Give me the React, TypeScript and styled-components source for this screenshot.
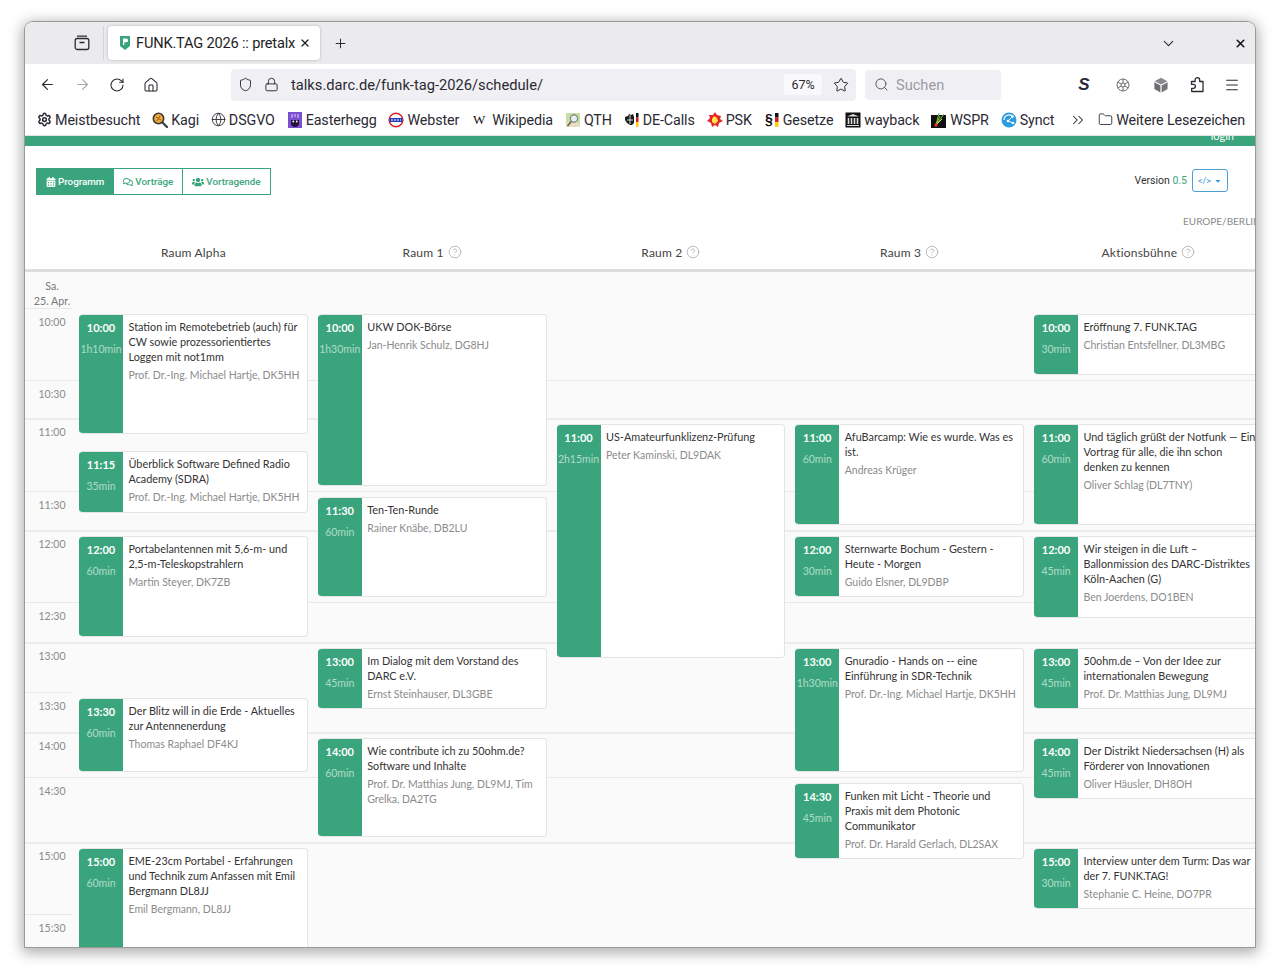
import React from 'react';
import styled, { createGlobalStyle } from 'styled-components';
import {
  ArrowLeft,
  ArrowRight,
  ChevronDown,
  ChevronsRight,
  CircleHelp,
  Folder,
  Globe,
  Home,
  Lock,
  Menu,
  Plus,
  RotateCw,
  Search,
  Settings,
  Shield,
  Star,
  X,
} from 'lucide-react';
import { FaCalendarAlt, FaCaretDown, FaRegComments, FaUsers } from 'react-icons/fa';

const GREEN = '#3aa57c';
const CHROME_FONT = '"Roboto", "Noto Sans", sans-serif';
const PAGE_FONT = '"Lato", "Noto Sans", sans-serif';

// row lines of the schedule, px from the top of the grid
const rowLines: [string, number][] = [
  ['t1000', 36],
  ['t1030', 108],
  ['t1100', 146],
  ['t1110', 167],
  ['t1115', 173],
  ['t1130', 219],
  ['t1150', 246],
  ['t1200', 258],
  ['t1230', 330],
  ['t1245', 351],
  ['t1300', 370],
  ['t1315', 391],
  ['t1330', 420],
  ['t1345', 442],
  ['t1400', 460],
  ['t1430', 505],
  ['t1445', 532],
  ['t1500', 570],
  ['t1515', 592],
  ['t1530', 642],
  ['tend', 720],
];

const gridRows = (() => {
  let out = '[tstart]';
  let prev = 0;
  for (const [name, y] of rowLines) {
    out += ` ${y - prev}px [${name}]`;
    prev = y;
  }
  return out;
})();

const GlobalStyle = createGlobalStyle`
  html, body {
    margin: 0;
    background: #fff;
  }
  body {
    font-family: ${CHROME_FONT};
  }
`;

const Desktop = styled.div`
  width: 1280px;
  height: 975px;
  padding: 22px 25px 28px;
  box-sizing: border-box;
  background: #fff;
  overflow: hidden;
`;

const Window = styled.div`
  height: 100%;
  display: flex;
  flex-direction: column;
  overflow: hidden;
  background: #fff;
  border-radius: 8px 8px 0 0;
  box-shadow: 0 0 0 1px #9a9a9a, 0 3px 14px 3px rgba(0, 0, 0, 0.32);
`;

const TabBar = styled.div`
  height: 42px;
  flex-shrink: 0;
  display: flex;
  align-items: center;
  background: #ebebed;
  color: #1e1e24;
`;

const ViewButton = styled.div`
  width: 79px;
  height: 34px;
  display: flex;
  align-items: center;
  justify-content: flex-end;
  padding-right: 13px;
  box-sizing: border-box;
  border-right: 1px solid #d4d4d6;
`;

const Tab = styled.div`
  width: 212px;
  height: 34px;
  margin-left: 4px;
  padding: 0 9px 0 9px;
  box-sizing: border-box;
  display: flex;
  align-items: center;
  gap: 3px;
  background: #fff;
  border-radius: 4px;
  box-shadow: 0 0 3px rgba(0, 0, 0, 0.25);
  font-size: 14.6px;
  letter-spacing: -0.18px;
  white-space: nowrap;
`;

const TabTitle = styled.span`
  flex: 1;
  overflow: hidden;
`;

const BarIcon = styled.span<{ $left?: number; $color?: string }>`
  display: inline-flex;
  margin-left: ${(p) => p.$left ?? 0}px;
  color: ${(p) => p.$color ?? '#2b2a33'};
`;

const TabSpacer = styled.div`
  flex: 1;
`;

const NavBar = styled.div`
  height: 43px;
  flex-shrink: 0;
  display: flex;
  align-items: center;
  padding: 0 0 2px 14px;
  box-sizing: border-box;
  background: #fff;
`;

const UrlBar = styled.div`
  width: 625px;
  height: 32px;
  margin-left: 72px;
  padding-left: 7px;
  box-sizing: border-box;
  display: flex;
  align-items: center;
  background: #f0f0f4;
  border-radius: 4px;
  font-size: 14.7px;
  color: #2b2a33;
`;

const UrlText = styled.span`
  margin-left: 12px;
  flex: 1;
`;

const ZoomPill = styled.span`
  width: 38px;
  height: 21px;
  display: flex;
  align-items: center;
  justify-content: center;
  background: #f9f9fb;
  border-radius: 3px;
  font-size: 12.5px;
`;

const SearchBox = styled.div`
  width: 136px;
  height: 30px;
  margin-left: 9px;
  padding-left: 9px;
  box-sizing: border-box;
  display: flex;
  align-items: center;
  gap: 7px;
  background: #f0f0f4;
  border-radius: 4px;
  font-size: 14.6px;
  color: #9a9aa2;
`;

const SBadge = styled.span`
  margin-left: 77px;
  width: 12px;
  font: italic 900 17px 'Liberation Sans', sans-serif;
  color: #2a2a3c;
  text-align: center;
`;

const Bookmarks = styled.div`
  height: 28px;
  flex-shrink: 0;
  display: flex;
  align-items: center;
  padding: 0 0 3px 12px;
  box-sizing: border-box;
  gap: 11.85px;
  background: #fff;
  font-size: 14.3px;
  letter-spacing: -0.1px;
  color: #2b2a33;
  white-space: nowrap;
`;

const Bookmark = styled.div`
  display: flex;
  align-items: center;
  gap: 3px;
`;

const MoreBookmarks = styled(Bookmark)`
  margin: 0 -1px 0 3px;
`;

const Favicon = styled.svg`
  width: 16px;
  height: 16px;
  flex-shrink: 0;
`;

const WikiMark = styled.span`
  width: 16px;
  margin-right: 2px;
  text-align: center;
  font: 13px 'Liberation Serif', serif;
  color: #111;
`;

const Page = styled.div`
  flex: 1;
  min-height: 0;
  overflow: hidden;
  background: #fff;
  font-family: ${PAGE_FONT};
  color: #333;
`;

const TopBar = styled.div`
  height: 11px;
  box-sizing: border-box;
  border-top: 1px solid #e2e2e2;
  display: flex;
  justify-content: flex-end;
  padding-right: 21px;
  overflow: hidden;
  background: ${GREEN};
  color: #fff;
  font-size: 11px;
  line-height: 13px;
`;

const LoginLink = styled.span`
  margin-top: -7px;
`;

const Toolbar = styled.div`
  padding: 22px 27px 0 11px;
  display: flex;
  justify-content: space-between;
`;

const NavTabs = styled.div`
  display: flex;
  height: 27px;
`;

const NavTab = styled.div<{ $active?: boolean }>`
  display: flex;
  align-items: center;
  gap: 2px;
  padding: 0 9px;
  margin-right: -1px;
  box-sizing: border-box;
  border: 1px solid ${GREEN};
  background: ${(p) => (p.$active ? GREEN : '#fff')};
  color: ${(p) => (p.$active ? '#fff' : GREEN)};
  font: 500 9.8px ${CHROME_FONT};
`;

const VersionBox = styled.div`
  display: flex;
  align-items: center;
  gap: 5px;
  height: 25px;
  font: 10.5px ${CHROME_FONT};
`;

const VersionNumber = styled.span`
  color: ${GREEN};
`;

const VersionButton = styled.div`
  width: 36px;
  height: 23px;
  box-sizing: border-box;
  display: flex;
  align-items: center;
  justify-content: center;
  gap: 3px;
  border: 1px solid #4e9fd6;
  border-radius: 3px;
  color: #3b99d9;
  font-size: 9px;
`;

const TzRow = styled.div`
  width: 72px;
  margin: 19px 0 0 auto;
  overflow: hidden;
  white-space: nowrap;
  font-size: 10px;
  line-height: 14px;
  color: #8a8a8a;
`;

const RoomRow = styled.div`
  display: grid;
  grid-template-columns: 54px repeat(5, 238.75px);
  padding-top: 7px;
  height: 34px;
  border-bottom: 3px solid #dcdcdc;
`;

const RoomName = styled.div<{ $col: number }>`
  grid-column: ${(p) => p.$col + 1};
  padding-right: 10px;
  display: flex;
  align-items: center;
  justify-content: center;
  gap: 4px;
  font-size: 12px;
  letter-spacing: 0.2px;
  color: #444;
`;

const HelpMark = styled.span`
  display: inline-flex;
  color: #a8a8a8;
`;

const ScheduleGrid = styled.div`
  display: grid;
  grid-template-columns: 54px repeat(5, 238.75px);
  grid-template-rows: ${gridRows};
  background: #fafafa;
`;

const DateCell = styled.div`
  grid-column: 1;
  grid-row: tstart / t1000;
  padding-top: 6px;
  text-align: center;
  font-size: 10.7px;
  line-height: 15px;
  color: #777;
`;

const TimeSlot = styled.div<{ $from: string; $to: string; $short?: boolean; $hour?: boolean }>`
  grid-column: ${(p) => (p.$short ? '1' : '1 / -1')};
  grid-row: ${(p) => `${p.$from} / ${p.$to}`};
  ${(p) => (p.$short ? 'margin-right: 6px;' : '')}
  border-top: ${(p) => (p.$hour ? '2px solid #ececec' : '1px solid #e8e8e8')};
  color: #8a8a8a;
  font-size: 10.5px;
`;

const TimeLabel = styled.div<{ $hour?: boolean }>`
  width: 54px;
  padding-top: ${(p) => (p.$hour ? 5 : 6)}px;
  text-align: center;
  line-height: 14px;
`;

const Card = styled.div<{ $col: number; $from: string; $to: string }>`
  grid-column: ${(p) => p.$col + 1};
  grid-row: ${(p) => `${p.$from} / ${p.$to}`};
  z-index: 1;
  margin: 6px 10px 5px 0;
  display: flex;
  overflow: hidden;
  background: #fff;
  border: 1px solid #e4e4e4;
  border-left: 0;
  border-radius: 4px;
  box-sizing: border-box;
`;

const CardTime = styled.div`
  width: 44px;
  flex-shrink: 0;
  padding-top: 6px;
  text-align: center;
  background: ${GREEN};
  color: #fff;
  font-size: 11px;
  font-weight: 700;
  line-height: 14px;
`;

const CardDuration = styled.div`
  margin-top: 7px;
  font-size: 10.5px;
  font-weight: 400;
  color: rgba(255, 255, 255, 0.6);
  white-space: nowrap;
`;

const CardBody = styled.div`
  flex: 1;
  min-width: 0;
  padding: 4px 2px 0 5.5px;
`;

const CardTitle = styled.div`
  font-size: 10.85px;
  line-height: 15px;
  color: #333;
`;

const CardSpeaker = styled.div`
  margin-top: 4px;
  font-size: 10.5px;
  line-height: 15px;
  color: #8b8b8b;
`;

type Talk = {
  col: number;
  from: string;
  to: string;
  start: string;
  duration: string;
  title: string;
  speaker: string;
};

const talks: Talk[] = [
  { col: 1, from: 't1000', to: 't1110', start: '10:00', duration: '1h10min', title: 'Station im Remotebetrieb (auch) für CW sowie prozessorientiertes Loggen mit not1mm', speaker: 'Prof. Dr.-Ing. Michael Hartje, DK5HH' },
  { col: 1, from: 't1115', to: 't1150', start: '11:15', duration: '35min', title: 'Überblick Software Defined Radio Academy (SDRA)', speaker: 'Prof. Dr.-Ing. Michael Hartje, DK5HH' },
  { col: 1, from: 't1200', to: 't1300', start: '12:00', duration: '60min', title: 'Portabelantennen mit 5,6-m- und 2,5-m-Teleskopstrahlern', speaker: 'Martin Steyer, DK7ZB' },
  { col: 1, from: 't1330', to: 't1430', start: '13:30', duration: '60min', title: 'Der Blitz will in die Erde - Aktuelles zur Antennenerdung', speaker: 'Thomas Raphael DF4KJ' },
  { col: 1, from: 't1500', to: 'tend', start: '15:00', duration: '60min', title: 'EME-23cm Portabel - Erfahrungen und Technik zum Anfassen mit Emil Bergmann DL8JJ', speaker: 'Emil Bergmann, DL8JJ' },
  { col: 2, from: 't1000', to: 't1130', start: '10:00', duration: '1h30min', title: 'UKW DOK-Börse', speaker: 'Jan-Henrik Schulz, DG8HJ' },
  { col: 2, from: 't1130', to: 't1230', start: '11:30', duration: '60min', title: 'Ten-Ten-Runde', speaker: 'Rainer Knäbe, DB2LU' },
  { col: 2, from: 't1300', to: 't1345', start: '13:00', duration: '45min', title: 'Im Dialog mit dem Vorstand des DARC e.V.', speaker: 'Ernst Steinhauser, DL3GBE' },
  { col: 2, from: 't1400', to: 't1500', start: '14:00', duration: '60min', title: 'Wie contribute ich zu 50ohm.de? Software und Inhalte', speaker: 'Prof. Dr. Matthias Jung, DL9MJ, Tim Grelka, DA2TG' },
  { col: 3, from: 't1100', to: 't1315', start: '11:00', duration: '2h15min', title: 'US-Amateurfunklizenz-Prüfung', speaker: 'Peter Kaminski, DL9DAK' },
  { col: 4, from: 't1100', to: 't1200', start: '11:00', duration: '60min', title: 'AfuBarcamp: Wie es wurde. Was es ist.', speaker: 'Andreas Krüger' },
  { col: 4, from: 't1200', to: 't1230', start: '12:00', duration: '30min', title: 'Sternwarte Bochum - Gestern - Heute - Morgen', speaker: 'Guido Elsner, DL9DBP' },
  { col: 4, from: 't1300', to: 't1430', start: '13:00', duration: '1h30min', title: 'Gnuradio - Hands on -- eine Einführung in SDR-Technik', speaker: 'Prof. Dr.-Ing. Michael Hartje, DK5HH' },
  { col: 4, from: 't1430', to: 't1515', start: '14:30', duration: '45min', title: 'Funken mit Licht - Theorie und Praxis mit dem Photonic Communikator', speaker: 'Prof. Dr. Harald Gerlach, DL2SAX' },
  { col: 5, from: 't1000', to: 't1030', start: '10:00', duration: '30min', title: 'Eröffnung 7. FUNK.TAG', speaker: 'Christian Entsfellner, DL3MBG' },
  { col: 5, from: 't1100', to: 't1200', start: '11:00', duration: '60min', title: 'Und täglich grüßt der Notfunk — Ein Vortrag für alle, die ihn schon denken zu kennen', speaker: 'Oliver Schlag (DL7TNY)' },
  { col: 5, from: 't1200', to: 't1245', start: '12:00', duration: '45min', title: 'Wir steigen in die Luft – Ballonmission des DARC-Distriktes Köln-Aachen (G)', speaker: 'Ben Joerdens, DO1BEN' },
  { col: 5, from: 't1300', to: 't1345', start: '13:00', duration: '45min', title: '50ohm.de – Von der Idee zur internationalen Bewegung', speaker: 'Prof. Dr. Matthias Jung, DL9MJ' },
  { col: 5, from: 't1400', to: 't1445', start: '14:00', duration: '45min', title: 'Der Distrikt Niedersachsen (H) als Förderer von Innovationen', speaker: 'Oliver Häusler, DH8OH' },
  { col: 5, from: 't1500', to: 't1530', start: '15:00', duration: '30min', title: 'Interview unter dem Turm: Das war der 7. FUNK.TAG!', speaker: 'Stephanie C. Heine, DO7PR' },
];

const slots = [
  { label: '10:00', from: 't1000', to: 't1030', short: true },
  { label: '10:30', from: 't1030', to: 't1100' },
  { label: '11:00', from: 't1100', to: 't1130', hour: true },
  { label: '11:30', from: 't1130', to: 't1200' },
  { label: '12:00', from: 't1200', to: 't1230', hour: true },
  { label: '12:30', from: 't1230', to: 't1300' },
  { label: '13:00', from: 't1300', to: 't1330', hour: true },
  { label: '13:30', from: 't1330', to: 't1400', short: true },
  { label: '14:00', from: 't1400', to: 't1430', hour: true },
  { label: '14:30', from: 't1430', to: 't1500' },
  { label: '15:00', from: 't1500', to: 't1530', hour: true },
  { label: '15:30', from: 't1530', to: 'tend', short: true },
];

const rooms = [
  { name: 'Raum Alpha', help: false },
  { name: 'Raum 1', help: true },
  { name: 'Raum 2', help: true },
  { name: 'Raum 3', help: true },
  { name: 'Aktionsbühne', help: true },
];

function ViewIcon() {
  return (
    <svg width="16" height="16" viewBox="0 0 16 16" fill="none" stroke="#2b2a33" strokeWidth="1.3">
      <rect x="1.2" y="3.5" width="13.6" height="11" rx="2" />
      <path d="M3.5 1.2h9" strokeLinecap="round" />
      <path d="M5.5 7.5h5" strokeWidth="1.6" />
    </svg>
  );
}

function PretalxIcon() {
  return (
    <Favicon viewBox="0 0 16 16">
      <path d="M3 1h10v10l-5 4-5-4z" fill={GREEN} />
      <path d="M6 3.5h3.2a1.8 1.8 0 0 1 0 3.8H7.3V10H6z" fill="#fff" />
    </Favicon>
  );
}

function KagiIcon() {
  return (
    <Favicon viewBox="0 0 16 16">
      <circle cx="6.5" cy="6.5" r="5.2" fill="#f2a83b" stroke="#3b3b3b" strokeWidth="1.6" />
      <path d="M4 5l5 3M5 9l3-5" stroke="#7a4b12" strokeWidth="0.8" />
      <path d="M10.5 10.5L15 15" stroke="#3b3b3b" strokeWidth="2.2" strokeLinecap="round" />
    </Favicon>
  );
}

function EasterheggIcon() {
  return (
    <Favicon viewBox="0 0 16 16">
      <rect x="1" y="0" width="14" height="16" fill="#7a4fd0" />
      <path d="M5 2v4M11 2v4M8 2v3" stroke="#c9b6f2" strokeWidth="1.3" />
      <path d="M4 8h8v3a4 4 0 0 1-8 0z" fill="#241238" />
      <circle cx="6.3" cy="9.5" r="0.9" fill="#fff" />
      <circle cx="9.7" cy="9.5" r="0.9" fill="#fff" />
    </Favicon>
  );
}

function WebsterIcon() {
  return (
    <Favicon viewBox="0 0 16 16">
      <circle cx="8" cy="8" r="6.8" fill="#fff" stroke="#d8232a" strokeWidth="1.5" />
      <rect x="1.5" y="6" width="13" height="4" fill="#2340b8" />
      <path d="M3 8h10" stroke="#fff" strokeWidth="1" strokeDasharray="2 1" />
    </Favicon>
  );
}

function QthIcon() {
  return (
    <Favicon viewBox="0 0 16 16">
      <rect x="1" y="1" width="14" height="14" fill="#c8dca6" />
      <path d="M1 11l6-3 8 4v3H1z" fill="#e8dfc2" />
      <circle cx="9" cy="6.5" r="3.6" fill="#e6eef4" stroke="#7a8a78" strokeWidth="1.2" />
      <path d="M6.3 9.4L2.5 14" stroke="#6d6d5d" strokeWidth="1.8" />
    </Favicon>
  );
}

function DeCallsIcon() {
  return (
    <Favicon viewBox="0 0 16 16">
      <path d="M1 5l3-1 1-2 2 1 2-1 1 3v6l-2 2H6l-3-2-2-3z" fill="#1b1b1b" />
      <path d="M3 8h6M6 3v9" stroke="#fff" strokeWidth="0.8" />
      <rect x="12" y="1" width="2.5" height="4.6" fill="#111" />
      <rect x="12" y="5.6" width="2.5" height="4.6" fill="#dd1c1c" />
      <rect x="12" y="10.2" width="2.5" height="4.6" fill="#ffce00" />
    </Favicon>
  );
}

function PskIcon() {
  return (
    <Favicon viewBox="0 0 16 16">
      <path d="M8 0l2 3 4 1-1 3 3 2-4 2-1 4-3-2-3 2-1-4-4-2 3-3-1-3 4 0z" fill="#e8262a" />
      <path d="M7 4l3 2 1 3-3 3-3-2 0-3z" fill="#ffe84a" />
    </Favicon>
  );
}

function GesetzeIcon() {
  return (
    <Favicon viewBox="0 0 16 16">
      <text x="1" y="12" fontFamily="Liberation Sans, sans-serif" fontWeight="700" fontSize="14" fill="#111">
        §
      </text>
      <rect x="11" y="1" width="3.5" height="4.6" fill="#111" />
      <rect x="11" y="5.6" width="3.5" height="4.6" fill="#dd1c1c" />
      <rect x="11" y="10.2" width="3.5" height="4.6" fill="#ffce00" />
    </Favicon>
  );
}

function WaybackIcon() {
  return (
    <Favicon viewBox="0 0 16 16">
      <rect x="0.5" y="0.5" width="15" height="15" fill="#111" />
      <path d="M2 4.5L8 2l6 2.5z" fill="#ddd" />
      <path d="M3.5 6v6M6.5 6v6M9.5 6v6M12.5 6v6" stroke="#ddd" strokeWidth="1.6" />
      <path d="M2 13.5h12" stroke="#ddd" strokeWidth="1.2" />
    </Favicon>
  );
}

function WsprIcon() {
  return (
    <Favicon viewBox="0 0 16 16">
      <rect x="0" y="3" width="15" height="13" fill="#111" />
      <path d="M5 13L8 1M5 13l4-9M5 13l8-11" stroke="#7cc83c" strokeWidth="1" />
      <path d="M5 13l6-6" stroke="#f2d23c" strokeWidth="1" />
      <circle cx="5" cy="13" r="1.7" fill="#e8322a" />
    </Favicon>
  );
}

function SyncIcon() {
  return (
    <Favicon viewBox="0 0 16 16">
      <circle cx="8" cy="8" r="7.5" fill="#2d9be0" />
      <path d="M3 8a5 5 0 0 1 9-3" stroke="#fff" strokeWidth="1.2" fill="none" />
      <path d="M11.5 4.5L7 9l5 2" stroke="#fff" strokeWidth="1" fill="none" />
      <circle cx="11.5" cy="4.5" r="1.3" fill="#fff" />
      <circle cx="7" cy="9" r="1.3" fill="#fff" />
      <circle cx="12" cy="11" r="1.3" fill="#fff" />
    </Favicon>
  );
}

function SnowIcon() {
  return (
    <svg width="14" height="14" viewBox="0 0 14 14" fill="none" stroke="#6b6b70" strokeWidth="1">
      <circle cx="7" cy="7" r="6" />
      <circle cx="7" cy="7" r="2" />
      <path d="M7 1v4M7 9v4M1.8 4l3.4 2M8.8 8l3.4 2M1.8 10l3.4-2M8.8 6l3.4-2" />
    </svg>
  );
}

function CubeIcon() {
  return (
    <svg width="16" height="16" viewBox="0 0 16 16">
      <path d="M8 0.8l6.4 3.4L8 7.6 1.6 4.2z" fill="#8a8a8e" />
      <path d="M1.4 5.2l6 3.2v7L1.4 12z" fill="#6e6e72" />
      <path d="M14.6 5.2l-6 3.2v7l6-3.4z" fill="#77777b" />
    </svg>
  );
}

function PuzzleIcon() {
  return (
    <svg width="17" height="17" viewBox="0 0 17 17" fill="none" stroke="#2b2a33" strokeWidth="1.3" strokeLinejoin="round">
      <path d="M2.5 5.5h3.6V4a2.3 2.3 0 1 1 4.6 0v1.5h3.3v10H2.7v-3.2H4.4a2 2 0 0 0 0-4H2.5z" />
    </svg>
  );
}

export default function App() {
  return (
    <>
      <GlobalStyle />
      <Desktop>
        <Window>
          <TabBar>
            <ViewButton>
              <ViewIcon />
            </ViewButton>
            <Tab>
              <PretalxIcon />
              <TabTitle>FUNK.TAG 2026 :: pretalx</TabTitle>
              <X size={12} strokeWidth={2.4} />
            </Tab>
            <BarIcon $left={13}>
              <Plus size={15} strokeWidth={1.6} />
            </BarIcon>
            <TabSpacer />
            <BarIcon>
              <ChevronDown size={17} strokeWidth={1.5} />
            </BarIcon>
            <BarIcon $left={57} $color="#15141a">
              <X size={13} strokeWidth={3} />
            </BarIcon>
            <BarIcon $left={8} />
          </TabBar>

          <NavBar>
            <ArrowLeft size={17} strokeWidth={1.6} color="#2b2a33" />
            <BarIcon $left={18} $color="#a8a8ad">
              <ArrowRight size={17} strokeWidth={1.6} />
            </BarIcon>
            <BarIcon $left={18}>
              <RotateCw size={16} strokeWidth={1.6} />
            </BarIcon>
            <BarIcon $left={18}>
              <Home size={16} strokeWidth={1.6} />
            </BarIcon>
            <UrlBar>
              <Shield size={15} strokeWidth={1.5} />
              <BarIcon $left={11}>
                <Lock size={15} strokeWidth={1.5} />
              </BarIcon>
              <UrlText>talks.darc.de/funk-tag-2026/schedule/</UrlText>
              <ZoomPill>67%</ZoomPill>
              <BarIcon $left={11}>
                <Star size={16} strokeWidth={1.5} />
              </BarIcon>
              <BarIcon $left={7} />
            </UrlBar>
            <SearchBox>
              <Search size={15} strokeWidth={1.6} color="#5b5b66" />
              Suchen
            </SearchBox>
            <SBadge>S</SBadge>
            <BarIcon $left={26}>
              <SnowIcon />
            </BarIcon>
            <BarIcon $left={23}>
              <CubeIcon />
            </BarIcon>
            <BarIcon $left={20}>
              <PuzzleIcon />
            </BarIcon>
            <BarIcon $left={18}>
              <Menu size={16} strokeWidth={1.6} />
            </BarIcon>
          </NavBar>

          <Bookmarks>
            <Bookmark>
              <Settings size={15} strokeWidth={2.4} />
              Meistbesucht
            </Bookmark>
            <Bookmark>
              <KagiIcon />
              Kagi
            </Bookmark>
            <Bookmark>
              <Globe size={15} strokeWidth={1.4} />
              DSGVO
            </Bookmark>
            <Bookmark>
              <EasterheggIcon />
              Easterhegg
            </Bookmark>
            <Bookmark>
              <WebsterIcon />
              Webster
            </Bookmark>
            <Bookmark>
              <WikiMark>W</WikiMark>
              Wikipedia
            </Bookmark>
            <Bookmark>
              <QthIcon />
              QTH
            </Bookmark>
            <Bookmark>
              <DeCallsIcon />
              DE-Calls
            </Bookmark>
            <Bookmark>
              <PskIcon />
              PSK
            </Bookmark>
            <Bookmark>
              <GesetzeIcon />
              Gesetze
            </Bookmark>
            <Bookmark>
              <WaybackIcon />
              wayback
            </Bookmark>
            <Bookmark>
              <WsprIcon />
              WSPR
            </Bookmark>
            <Bookmark>
              <SyncIcon />
              Synct
            </Bookmark>
            <MoreBookmarks>
              <ChevronsRight size={18} strokeWidth={1.4} />
            </MoreBookmarks>
            <Bookmark>
              <Folder size={15} strokeWidth={1.4} />
              Weitere Lesezeichen
            </Bookmark>
          </Bookmarks>

          <Page>
            <TopBar>
              <LoginLink>login</LoginLink>
            </TopBar>
            <Toolbar>
              <NavTabs>
                <NavTab $active>
                  <FaCalendarAlt size={10} />
                  Programm
                </NavTab>
                <NavTab>
                  <FaRegComments size={10} />
                  Vorträge
                </NavTab>
                <NavTab>
                  <FaUsers size={12} />
                  Vortragende
                </NavTab>
              </NavTabs>
              <VersionBox>
                <span>
                  Version <VersionNumber>0.5</VersionNumber>
                </span>
                <VersionButton>
                  &lt;/&gt;
                  <FaCaretDown size={8} />
                </VersionButton>
              </VersionBox>
            </Toolbar>
            <TzRow>EUROPE/BERLIN</TzRow>
            <RoomRow>
              {rooms.map((room, i) => (
                <RoomName key={room.name} $col={i + 1}>
                  {room.name}
                  {room.help && (
                    <HelpMark>
                      <CircleHelp size={14} strokeWidth={1.3} />
                    </HelpMark>
                  )}
                </RoomName>
              ))}
            </RoomRow>
            <ScheduleGrid>
              <DateCell>
                Sa.
                <br />
                25. Apr.
              </DateCell>
              {slots.map((s) => (
                <TimeSlot key={s.label} $from={s.from} $to={s.to} $short={s.short} $hour={s.hour}>
                  <TimeLabel $hour={s.hour}>{s.label}</TimeLabel>
                </TimeSlot>
              ))}
              {talks.map((t) => (
                <Card key={t.col + t.start} $col={t.col} $from={t.from} $to={t.to}>
                  <CardTime>
                    {t.start}
                    <CardDuration>{t.duration}</CardDuration>
                  </CardTime>
                  <CardBody>
                    <CardTitle>{t.title}</CardTitle>
                    <CardSpeaker>{t.speaker}</CardSpeaker>
                  </CardBody>
                </Card>
              ))}
            </ScheduleGrid>
          </Page>
        </Window>
      </Desktop>
    </>
  );
}
